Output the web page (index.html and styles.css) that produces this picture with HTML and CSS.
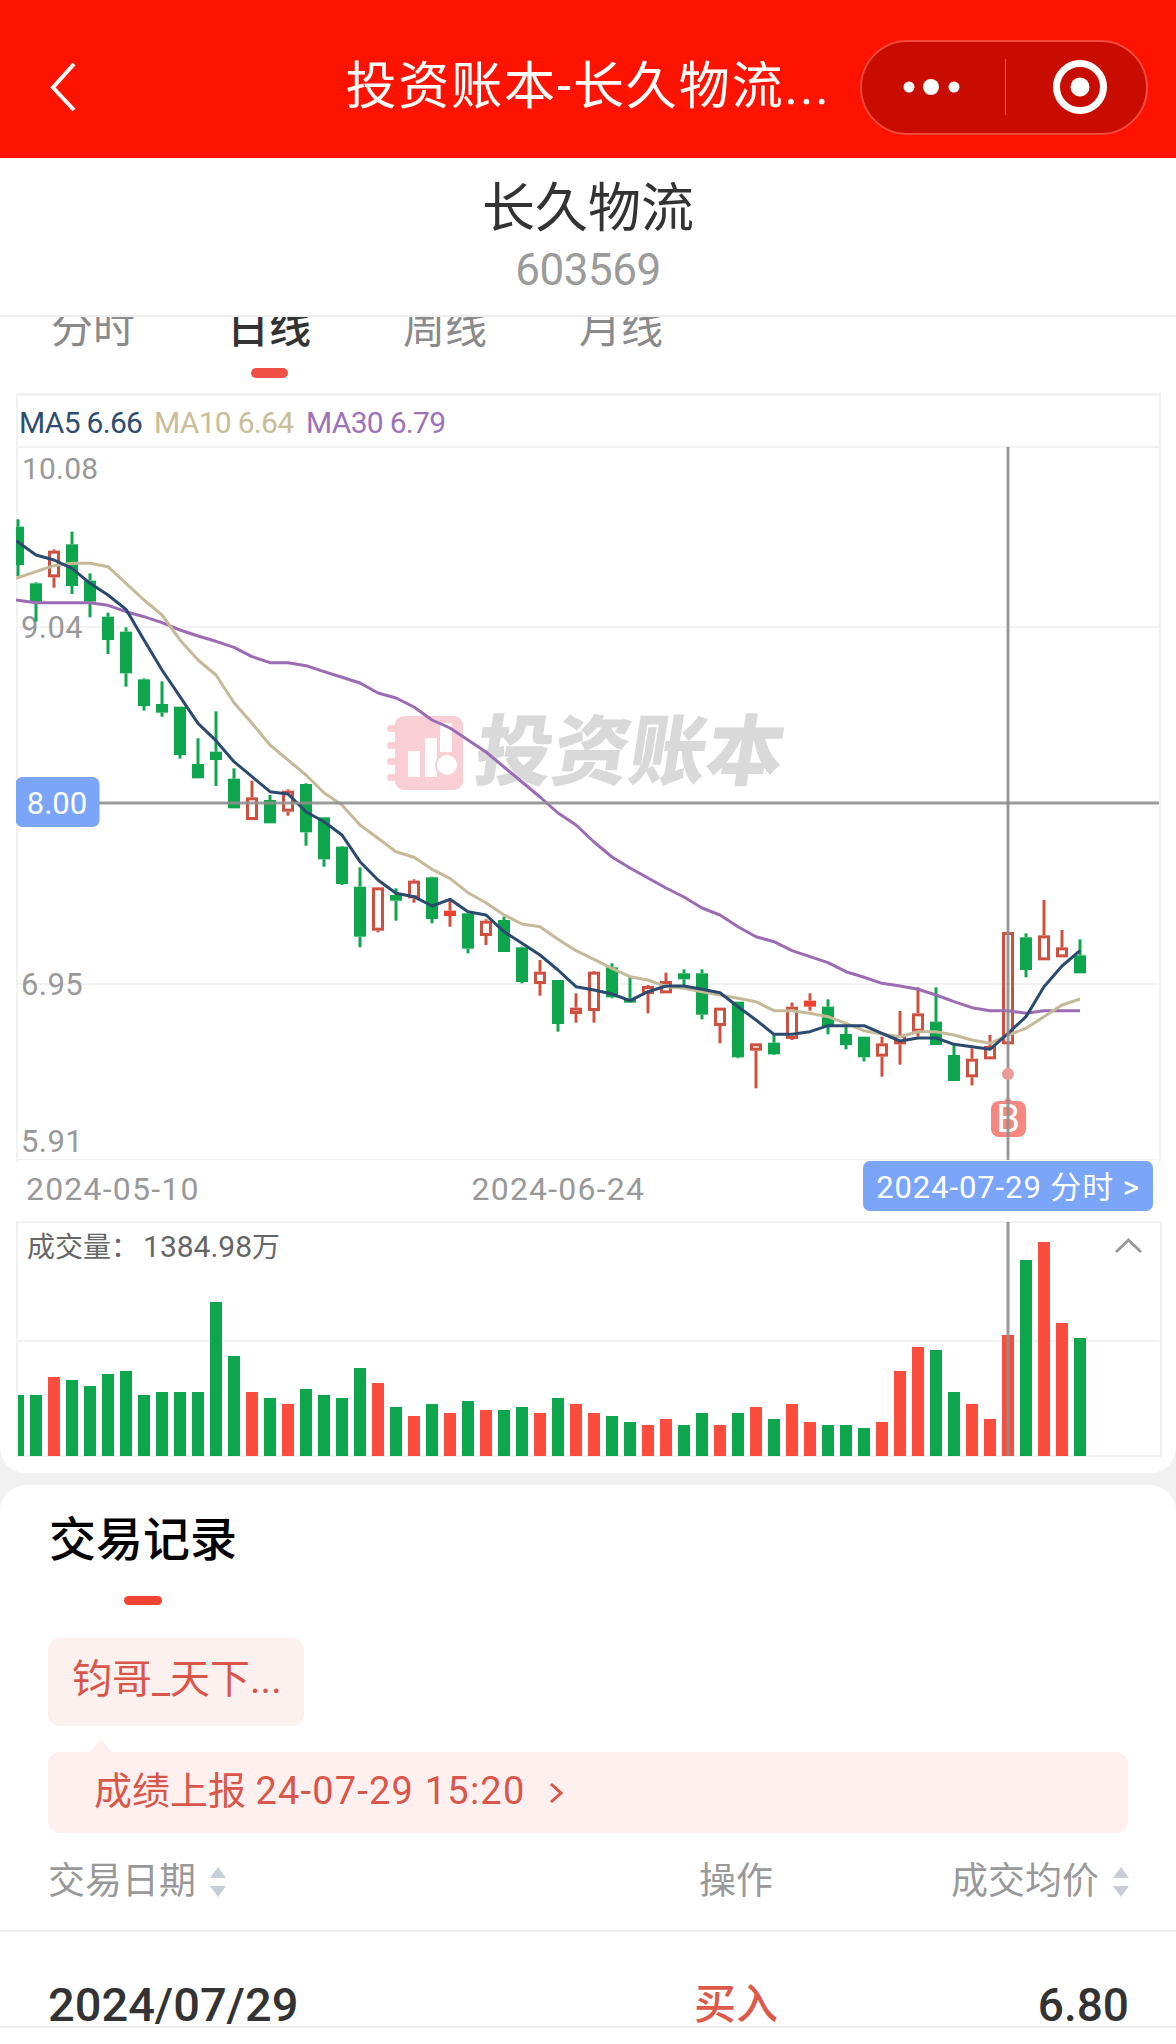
FILE: index.html
```html
<!DOCTYPE html>
<html lang="zh-CN">
<head>
<meta charset="utf-8">
<title>长久物流</title>
<link rel="stylesheet" href="styles.css">
</head>
<body>
<header class="nav">
  <div class="nav-left">
    <svg class="back" viewBox="0 0 26 50"><path d="M24 2 3 25.5 24 48"/></svg>
  </div>
  <div class="nav-title">投资账本-长久物流...</div>
  <div class="nav-right">
    <div class="capsule">
      <svg class="cap-dots" viewBox="0 0 60 20"><circle cx="6" cy="10" r="5.5"/><circle cx="28" cy="10" r="8"/><circle cx="51" cy="10" r="5.5"/></svg>
      <span class="cap-div"></span>
      <svg class="cap-target" viewBox="0 0 56 56"><circle class="ring" cx="28" cy="28" r="23.5"/><circle class="dot" cx="28" cy="28" r="9.5"/></svg>
    </div>
  </div>
</header>

<section class="stock">
  <div class="stock-name">长久物流</div>
  <div class="stock-code">603569</div>
</section>

<main class="panel">
  <nav class="tabs">
    <div class="tab"><span>分时</span></div>
    <div class="tab tab-on"><span>日线</span><i class="tab-bar"></i></div>
    <div class="tab"><span>周线</span></div>
    <div class="tab"><span>月线</span></div>
  </nav>

  <div class="kbox">
    <div class="watermark">
      <svg class="wm-icon" viewBox="0 0 76 74">
        <rect class="wm-back" x="8" y="0" width="68" height="74" rx="9"/>
        <rect class="wm-back" x="0" y="9" width="16" height="7" rx="3.5"/>
        <rect class="wm-back" x="0" y="26" width="16" height="7" rx="3.5"/>
        <rect class="wm-back" x="0" y="42" width="16" height="7" rx="3.5"/>
        <rect class="wm-back" x="0" y="58" width="16" height="7" rx="3.5"/>
        <rect class="wm-fore" x="21" y="35" width="12" height="26"/>
        <rect class="wm-fore" x="38" y="22" width="12" height="39"/>
        <rect class="wm-fore" x="53" y="7" width="12" height="29"/>
        <circle class="wm-fore wm-coin" cx="60" cy="49" r="11"/>
      </svg>
      <span class="wm-text">投资账本</span>
    </div>
    <svg class="ksvg" viewBox="16 393 1146 767" width="1146" height="767">
      <defs><clipPath id="kclip"><rect x="16" y="395" width="1143" height="765"/></clipPath></defs>
      <g class="grid">
        <line x1="18" x2="1159" y1="447" y2="447"/>
        <line x1="18" x2="1159" y1="627" y2="627"/>
        <line x1="18" x2="1159" y1="984" y2="984"/>
        <line x1="18" x2="1159" y1="1160" y2="1160"/>
      </g>
      <text class="ma ma5" x="19" y="433">MA5 6.66</text>
      <text class="ma ma10" x="154" y="433">MA10 6.64</text>
      <text class="ma ma30" x="306" y="433">MA30 6.79</text>
      <text class="axis" x="22" y="479">10.08</text>
      <text class="axis axis-wide" x="21" y="638">9.04</text>
      <text class="axis axis-wide" x="21" y="995">6.95</text>
      <text class="axis axis-wide" x="21" y="1152">5.91</text>
      <g id="candles" clip-path="url(#kclip)"></g>
      <g id="lines" clip-path="url(#kclip)"></g>
      <rect class="mark-bg" x="991" y="1101" width="35" height="36" rx="8"/>
      <path class="mark-bg" d="M1003 1102 1008 1097 1013 1102Z"/>
      <text class="mark-b" x="1008" y="1132">B</text>
      <line class="cross" x1="99" x2="1159" y1="803" y2="803"/>
      <line class="cross" x1="1008" x2="1008" y1="447" y2="1160"/>
      <circle class="mark-dot" cx="1008" cy="1074" r="6"/>
      <rect class="price-tag" x="15.5" y="777" width="84" height="50" rx="7"/>
      <text class="price-text" x="57" y="814">8.00</text>
    </svg>
  </div>

  <div class="dates">
    <span class="date date-a">2024-05-10</span>
    <span class="date date-b">2024-06-24</span>
    <span class="date-tag">2024-07-29 分时 &gt;</span>
  </div>

  <div class="vbox">
    <svg class="vsvg" viewBox="16 1221 1146 236" width="1146" height="236">
      <line class="grid-line" x1="18" x2="1159" y1="1341" y2="1341"/>
      <g id="volumes"></g>
      <line class="cross" x1="1008" x2="1008" y1="1222" y2="1456"/>
      <path class="vol-chevron" d="M1116 1252 1128.5 1240 1141 1252"/>
      <text class="vol-label" x="27" y="1257">成交量：<tspan class="vol-num" dx="4">1384.98</tspan>万</text>
    </svg>
  </div>
</main>

<section class="records">
  <h2 class="rec-title">交易记录</h2>
  <i class="rec-bar"></i>
  <div class="pill">钧哥_天下...</div>
  <div class="report">
    <span class="report-text">成绩上报 <span class="report-num">24-07-29 15:20</span></span>
    <svg class="report-arrow" viewBox="0 0 14 22"><path d="M2 2 12 11 2 20"/></svg>
  </div>
  <div class="tr thead">
    <div class="td td-l">交易日期<svg class="sort" viewBox="0 0 16 30"><path d="M8 0 16 11H0Z"/><path d="M0 19H16L8 30Z"/></svg></div>
    <div class="td td-c">操作</div>
    <div class="td td-r">成交均价<svg class="sort" viewBox="0 0 16 30"><path d="M8 0 16 11H0Z"/><path d="M0 19H16L8 30Z"/></svg></div>
  </div>
  <div class="tr tbody">
    <div class="td td-l date-val">2024/07/29</div>
    <div class="td td-c buy">买入</div>
    <div class="td td-r price-val">6.80</div>
  </div>
</section>
<script src="script.js"></script>
</body>
</html>
```
FILE: styles.css
```css
* { box-sizing: border-box; }
html, body { margin: 0; padding: 0; }
body {
  width: 1176px;
  height: 2044px;
  overflow: hidden;
  background: #f1f1f1;
  font-family: Roboto, "Noto Sans CJK SC", sans-serif;
  color: #333;
}

/* top navigation */
.nav {
  height: 158px;
  padding-top: 16px;
  background: #fe1200;
  display: grid;
  grid-template-columns: 1fr auto 1fr;
  align-items: center;
  color: #fff;
}
.nav-left { padding-left: 50px; display: flex; }
.back { width: 26px; height: 50px; fill: none; stroke: #fff; stroke-width: 4; }
.nav-title { font-size: 51px; line-height: 60px; white-space: nowrap; letter-spacing: 1.9px; }
.nav-right { display: flex; justify-content: flex-end; padding-right: 28px; }
.capsule {
  width: 288px;
  height: 95px;
  border: 2px solid #f24a3c;
  border-radius: 48px;
  background: #c80d00;
  display: flex;
  align-items: center;
}
.cap-dots { width: 60px; height: 20px; fill: #fff; margin-left: 41px; }
.cap-div { width: 1px; height: 56px; background: #e8564a; margin-left: 42px; }
.cap-target { width: 56px; height: 56px; margin-left: 46px; }
.cap-target .ring { fill: none; stroke: #fff; stroke-width: 7; }
.cap-target .dot { fill: #fff; }

/* stock heading */
.stock {
  height: 159px;
  background: #fff;
  border-bottom: 2px solid #eeeeee;
  display: flex;
  flex-direction: column;
  align-items: center;
}
.stock-name { font-size: 53px; line-height: 60px; color: #333; margin-top: 21px; }
.stock-code { font-size: 44px; line-height: 50px; color: #9b9b9b; margin-top: 6px; letter-spacing: -0.5px; }

/* chart panel */
.panel {
  background: #fff;
  height: 1156px;
  border-radius: 0 0 26px 26px;
}
.tabs { height: 76px; overflow: hidden; display: flex; padding-left: 5px; }
.tab {
  width: 176px;
  display: flex;
  flex-direction: column;
  align-items: center;
  margin-top: -9px;
  font-size: 42px;
  line-height: 42px;
  color: #8a8a8a;
}
.tab-on { color: #333; font-weight: 500; }
.tab-bar { width: 37px; height: 10px; margin-top: 18px; border-radius: 5px; background: #f05045; }

.kbox {
  position: relative;
  height: 767px;
  margin-left: 16px;
  width: 1146px;
}
.kbox::before {
  content: "";
  position: absolute;
  inset: 0 1px -2px 0;
  border: solid #f2f2f2;
  border-width: 3px 2px 0 2px;
}
.ksvg, .vsvg { display: block; position: relative; }
.watermark {
  position: absolute;
  left: 371px;
  top: 322px;
  display: flex;
  align-items: center;
  gap: 13px;
}
.wm-icon { width: 76px; height: 74px; }
.wm-back { fill: #f9cfd5; }
.wm-fore { fill: #fff; }
.wm-coin { stroke: #f9cfd5; stroke-width: 2; }
.wm-text {
  font-size: 77px;
  line-height: 76px;
  font-weight: 900;
  color: #d9d9d9;
  white-space: nowrap;
  transform: skewX(-9deg);
}

.grid line, .grid-line { stroke: #f2f2f2; stroke-width: 2; }
.ma { font-size: 30px; letter-spacing: -0.7px; }
.ma5 { fill: #2f4d70; }
.ma10 { fill: #c8bd96; }
.ma30 { fill: #9d72b8; }
.axis { font-size: 30px; fill: #999; letter-spacing: 0.2px; }
.axis-wide { font-size: 31px; letter-spacing: 0.4px; }
.cross { stroke: #8f8f8f; stroke-width: 3; stroke-opacity: 0.9; }
.price-tag { fill: #7aa5f9; }
.price-text { font-size: 31px; fill: #fff; text-anchor: middle; }
.mark-bg { fill: #f4877f; }
.mark-b { font-size: 38px; fill: #fff; text-anchor: middle; }
.mark-dot { fill: #ea9a98; }
.c-body-g { fill: #0da64c; }
.c-wick-g { stroke: #0da64c; stroke-width: 3; }
.c-body-r { fill: none; stroke: #d0503f; stroke-width: 3; }
.c-solid-r { fill: #f0402f; }
.c-wick-r { stroke: #d0503f; stroke-width: 3; }
.l-ma5, .l-ma10, .l-ma30 { fill: none; stroke-width: 3; stroke-linejoin: round; }
.l-ma5 { stroke: #2b4a6f; }
.l-ma10 { stroke: #c5b998; }
.l-ma30 { stroke: #9b6cb3; }

.dates { height: 61px; position: relative; display: flex; align-items: center; padding: 0 23px 0 26px; }
.date { font-size: 32px; line-height: 40px; color: #999; letter-spacing: 1.2px; white-space: nowrap; margin-top: -4px; }
.date-b { margin-left: 272px; }
.date-tag {
  margin-left: auto;
  width: 290px;
  height: 50px;
  margin-top: -9px;
  border-radius: 7px;
  background: #7aa5f9;
  color: #fff;
  font-size: 31px;
  line-height: 53px;
  text-align: center;
  white-space: nowrap;
  letter-spacing: 0.9px;
}

.vbox {
  width: 1146px;
  height: 236px;
  margin-left: 16px;
  border: solid #f2f2f2;
  border-width: 2px;
  position: relative;
}
.vsvg { position: absolute; left: -2px; top: -2px; }
.v-g { fill: #0da64c; }
.v-r { fill: #fb4d3d; }
.vol-chevron { fill: none; stroke: #9a9a9a; stroke-width: 3; }
.vol-label { font-size: 28px; fill: #666; }
.vol-num { font-size: 30px; }

/* trading records */
.records {
  margin-top: 12px;
  height: 559px;
  background: #fff;
  border-radius: 26px 26px 0 0;
  padding-top: 25px;
  position: relative;
}
.rec-title {
  margin: 0 0 0 49px;
  font-size: 47px;
  line-height: 60px;
  font-weight: 500;
  color: #000;
}
.rec-bar { display: block; width: 38px; height: 9px; margin: 26px 0 0 124px; border-radius: 5px; background: #ee4433; }
.pill {
  width: 256px;
  height: 88px;
  margin: 33px 0 0 48px;
  padding-left: 24px;
  border-radius: 12px;
  background: #fdf1f0;
  color: #d9564a;
  font-size: 40px;
  line-height: 84px;
  white-space: nowrap;
}
.report {
  position: relative;
  height: 81px;
  margin: 26px 48px 0;
  padding-left: 46px;
  border-radius: 12px;
  background: #fef0ef;
  display: flex;
  align-items: center;
}
.report::before {
  content: "";
  position: absolute;
  left: 42px;
  top: -13px;
  border: solid transparent;
  border-width: 0 11px 13px;
  border-bottom-color: #fef0ef;
}
.report-text { color: #d9564a; font-size: 38px; line-height: 46px; white-space: nowrap; margin-top: -3px; }
.report-num { letter-spacing: 1.2px; }
.report-arrow { width: 14px; height: 22px; margin-left: 24px; fill: none; stroke: #d9564a; stroke-width: 3; }

.tr {
  display: grid;
  grid-template-columns: 588px 200px 1fr;
  padding: 0 47px 0 48px;
  border-bottom: 2px solid #eeeeee;
  align-items: center;
}
.thead { height: 99px; color: #999; font-size: 37px; }
.tbody { height: 96px; padding-top: 51px; }
.td { display: flex; align-items: center; white-space: nowrap; line-height: 44px; }
.td-c { justify-content: center; }
.td-r { justify-content: flex-end; }
.sort { width: 16px; height: 30px; margin-left: 14px; fill: #c8ced6; }
.date-val { font-size: 47px; color: #333; font-weight: 500; }
.buy { font-size: 42px; color: #dd5a4a; font-weight: 500; margin-top: -1px; }
.price-val { font-size: 46px; color: #333; font-weight: 500; }
```
FILE: script.js
```js
const NS = "http://www.w3.org/2000/svg";
function add(parent, tag, attrs) {
  const el = document.createElementNS(NS, tag);
  for (const k in attrs) el.setAttribute(k, attrs[k]);
  parent.appendChild(el);
  return el;
}
const X = i => 18 * i; // candle / bar i (1-based) centre

// [colour, bodyTop, bodyBottom, wickTop, wickBottom]; base + value / 3 = page y
const candleGroups = [
  [500, [["g",80,195,58,228],["g",250,305,247,365],["r",152,232,148,263],["g",133,258,95,282],["g",242,305,220,352],
         ["g",350,420,338,462],["g",395,520,382,560],["g",538,618,535,632],["g",612,638,544,650],["g",620,765,620,776],
         ["g",792,835,715,835],["g",755,780,634,858],["g",836,925,805,925],["r",892,960,842,960],["g",900,970,885,970],
         ["r",872,935,868,947],["g",852,997,850,1037]]],
  [480, [["g",1012,1138,1012,1160]]],
  [680, [["g",500,612,498,615],["g",620,770,562,802],["r",622,752,622,757],["g",645,662,625,722],["r",602,655,598,668],
         ["g",592,717,590,730],["s",692,708,658,740],["g",700,806,700,820],["r",722,768,718,795],["g",720,816,710,816],
         ["g",802,906,800,910],["r",875,912,840,947],["g",900,1032,900,1055],["r",983,1002,940,1028],["r",875,993,873,1028],
         ["g",862,952,850,955],["g",955,968,888,968],["r",918,942,915,1000],["r",903,940,878,940],["g",880,898,868,918],
         ["g",880,1004,868,1018],["r",983,1038,983,1090],["g",965,1132,965,1135]]],
  [860, [["r",550,572,550,685],["g",548,583,525,585],["r",440,537,428,540],["s",422,440,400,452],["g",440,498,418,523],
         ["g",522,555,500,568],["g",530,592,530,604],["r",550,590,530,650],["r",525,553,453,614],["r",460,515,382,530],
         ["g",485,555,382,555],["g",585,663,555,663],["r",596,652,565,676],["r",558,598,525,598],["r",216,553,216,553],
         ["g",232,330,220,352],["r",226,301,120,301],["r",262,292,210,292],["g",286,340,238,340]]]
];

const candles = document.getElementById("candles");
let idx = 1;
for (const [base, list] of candleGroups) {
  for (const [c, bt, bb, wt, wb] of list) {
    const x = X(idx++);
    const y = v => base + v / 3;
    const kind = c === "g" ? "g" : "r";
    if (wt < bt) add(candles, "line", { class: "c-wick-" + kind, x1: x, x2: x, y1: y(wt), y2: y(bt) });
    if (wb > bb) add(candles, "line", { class: "c-wick-" + kind, x1: x, x2: x, y1: y(bb), y2: y(wb) });
    if (c === "g") add(candles, "rect", { class: "c-body-g", x: x - 6, y: y(bt), width: 12, height: y(bb) - y(bt) });
    else if (c === "s") add(candles, "rect", { class: "c-solid-r", x: x - 6, y: y(bt), width: 12, height: y(bb) - y(bt) });
    else add(candles, "rect", { class: "c-body-r", x: x - 4.5, y: y(bt) + 1.5, width: 9, height: y(bb) - y(bt) - 3 });
  }
}

// moving averages: page y for candle 1..60
const f = (base, arr) => arr.map(v => base + v / 3);
const ma5 = [...f(500,[122,165,180,205,250,285,328,420,510,590,670,722,785,830,875,882,935,965,1005]),
             ...f(680,[545,600,640,650,678,658,695,705,755,790,825,870,920,930,942,962,935,918,918,928,938]),
             ...f(860,[440,480,523,523,515,497,497,497,520,543,534,534,553,560,568,520,470,380,318,272])];
const ma10 = [...f(500,[235,215,197,190,190,200,250,300,345,420,480,525,608,670,735,780,825,878,915]),
              ...f(680,[435,475,515,532,568,595,638,668,705,732,740,778,812,838,865,890,900,920,925,935,945]),
              ...f(860,[415,425,452,452,460,470,490,512,522,530,515,515,525,540,550,525,505,470,435,417])];
const ma30 = [...f(500,[300,308,308,308,308,316,335,350,368,390,408,424,442,470,488,488,497,515,532]),
              683,693,698,707,720,728,740,752,767,782,797,813,825,842,857,868,878,888,897,908,915,
              ...f(860,[200,230,245,272,290,308,335,352,370,378,388,405,425,443,452,452,460,452,452,452])];
const lines = document.getElementById("lines");
[["l-ma30", ma30], ["l-ma10", ma10], ["l-ma5", ma5]].forEach(([cls, data]) => {
  add(lines, "polyline", { class: cls, points: data.map((y, i) => (i === 0 ? 16 : X(i + 1)) + "," + y.toFixed(1)).join(" ") });
});

// volume bars: [colour, top]; page y = 1200 + top / 3, bottom at 1456
const vols = "g585 g585 r531 g540 g558 g522 g513 g585 g576 g576 g576 g306 g468 r576 g594 r612 g567 g585 g594 g504 r549 g621 r648 g612 r639 g603 r630 g630 g621 r639 g594 r612 r639 g648 g666 r675 r657 g675 g639 r675 g639 r621 g657 r612 r666 g675 g675 g684 r666 r513 r441 g450 g576 r612 r657 r405 g180 r126 r369 g414".split(" ");
const vg = document.getElementById("volumes");
vols.forEach((v, i) => {
  const top = 1200 + Number(v.slice(1)) / 3;
  const x = Math.max(X(i + 1) - 6, 18);
  const w = X(i + 1) + 6 - x;
  add(vg, "rect", { class: "v-" + v[0], x: x, y: top, width: w, height: 1456 - top });
});
```
